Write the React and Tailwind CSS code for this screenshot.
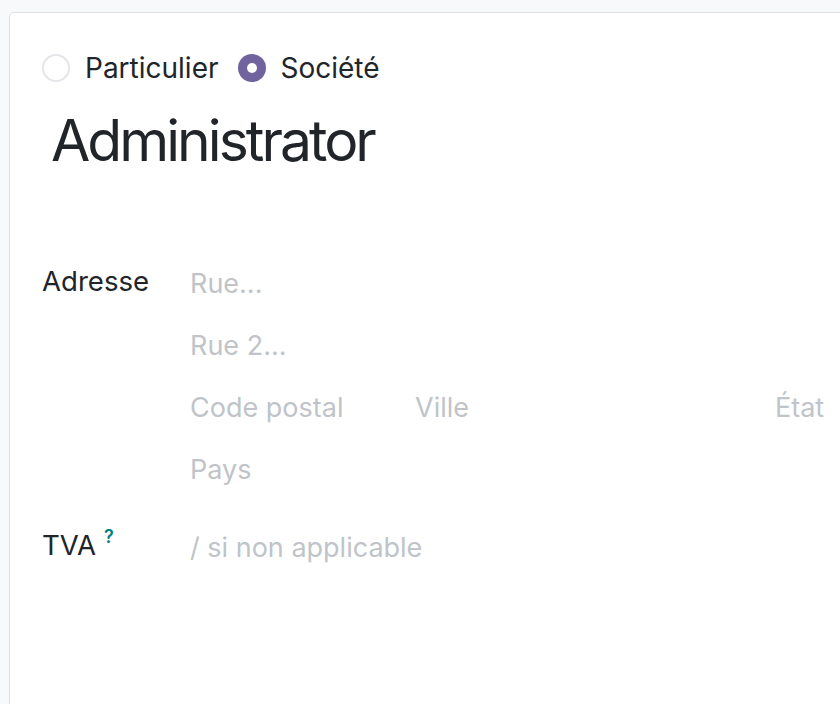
import React from 'react';

function Radio({ checked, label }) {
  return (
    <label className="flex items-center gap-[15px]">
      {checked ? (
        <span className="w-[28px] h-[28px] rounded-full bg-[#71639e] flex items-center justify-center">
          <span className="w-[10px] h-[10px] rounded-full bg-white" />
        </span>
      ) : (
        <span className="w-[28px] h-[28px] rounded-full border-2 border-[#e3e5e8] bg-white" />
      )}
      <span className="text-[28px] text-[#212529]">{label}</span>
    </label>
  );
}

function Placeholder({ children, className = '' }) {
  return <div className={`text-[27px] text-[#c0c4c9] ${className}`}>{children}</div>;
}

export default function App() {
  return (
    <div className="h-[704px] overflow-hidden bg-[#f8f9fa] pl-[9px] pt-[12px] font-['Inter',sans-serif]">
      <div className="w-[900px] h-[760px] bg-white border border-[#dee2e6] rounded-[5px] pl-[32px] pt-[39px]">
        {/* Company type */}
        <div className="flex items-center gap-[19px] h-[32px]">
          <Radio label="Particulier" />
          <Radio checked label="Société" />
        </div>

        {/* Name */}
        <h1 className="mt-[22px] ml-[9px] text-[57px] tracking-[-0.052em] leading-[70px] text-[#212529]">Administrator</h1>

        {/* Address */}
        <div className="mt-[92px] flex">
          <div className="w-[148px] text-[27.6px] text-[#212529] leading-[32px] mt-[-3px]">Adresse</div>
          <div className="flex flex-col">
            <Placeholder className="leading-[32px] h-[62px]">Rue...</Placeholder>
            <Placeholder className="leading-[32px] h-[62px]">Rue 2...</Placeholder>
            <div className="flex h-[62px] leading-[32px]">
              <Placeholder className="w-[225px]">Code postal</Placeholder>
              <Placeholder className="w-[360px]">Ville</Placeholder>
              <Placeholder>État</Placeholder>
            </div>
            <Placeholder className="leading-[32px] h-[62px]">Pays</Placeholder>
          </div>
        </div>

        {/* VAT */}
        <div className="mt-[16px] flex">
          <div className="w-[148px] text-[27.6px] text-[#212529] leading-[32px] mt-[-3px]">
            TVA<sup className="ml-[8px] text-[18px] font-semibold text-[#017e84] top-[-12px]">?</sup>
          </div>
          <Placeholder className="leading-[32px]">/ si non applicable</Placeholder>
        </div>
      </div>
    </div>
  );
}
